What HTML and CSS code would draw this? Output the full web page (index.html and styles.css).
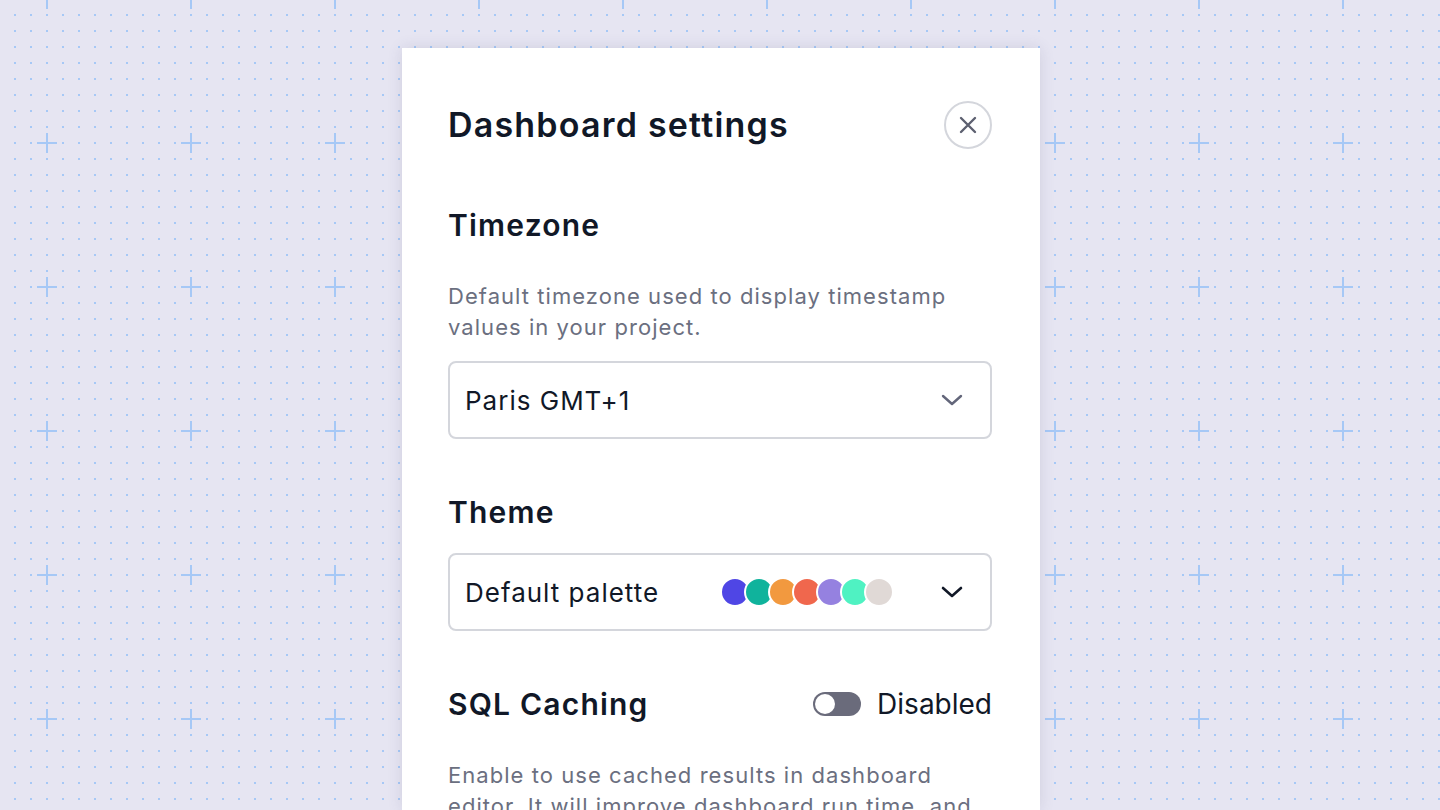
FILE: index.html
```html
<!DOCTYPE html>
<html lang="en">
<head>
<meta charset="utf-8">
<title>Dashboard settings</title>
<link rel="stylesheet" href="styles.css">
</head>
<body>
<svg class="backdrop" width="1440" height="810" aria-hidden="true">
  <defs>
    <pattern id="dots" width="16" height="16" patternUnits="userSpaceOnUse">
      <rect x="14" y="14" width="2" height="2" fill="#a6c8f6"/>
    </pattern>
    <pattern id="plus" x="0" y="-72" width="144" height="144" patternUnits="userSpaceOnUse">
      <rect x="46" y="61" width="2" height="20" fill="#a6c8f6"/>
      <rect x="37" y="70" width="20" height="2" fill="#a6c8f6"/>
    </pattern>
  </defs>
  <rect width="1440" height="810" fill="url(#dots)"/>
  <rect width="1440" height="810" fill="url(#plus)"/>
</svg>

<main class="modal">
  <header class="modal-header">
    <h1 class="modal-title">Dashboard settings</h1>
    <button class="close-btn" aria-label="Close">
      <svg width="18" height="18" viewBox="0 0 18 18"><path d="M2 2 L16 16 M16 2 L2 16" stroke="#5d6070" stroke-width="2.4" stroke-linecap="round"/></svg>
    </button>
  </header>

  <section class="section">
    <h2 class="section-title">Timezone</h2>
    <p class="section-desc">Default timezone used to display timestamp values in your project.</p>
    <div class="select">
      <span class="select-value">Paris GMT+1</span>
      <svg class="chevron" width="22" height="12" viewBox="0 0 22 12"><path d="M2 2 L11 10 L20 2" fill="none" stroke="#63667a" stroke-width="2.4" stroke-linecap="round" stroke-linejoin="round"/></svg>
    </div>
  </section>

  <section class="section section-theme">
    <h2 class="section-title">Theme</h2>
    <div class="select select-theme">
      <span class="select-value">Default palette</span>
      <span class="palette">
        <span class="swatch" style="background:#4f46e5"></span>
        <span class="swatch" style="background:#10b39c"></span>
        <span class="swatch" style="background:#f2993f"></span>
        <span class="swatch" style="background:#f0674d"></span>
        <span class="swatch" style="background:#9581e0"></span>
        <span class="swatch" style="background:#4ff2c2"></span>
        <span class="swatch" style="background:#e0d9d6"></span>
      </span>
      <svg class="chevron" width="22" height="12" viewBox="0 0 22 12"><path d="M2 2 L11 10 L20 2" fill="none" stroke="#111827" stroke-width="2.6" stroke-linecap="round" stroke-linejoin="round"/></svg>
    </div>
  </section>

  <section class="section section-sql">
    <div class="row">
      <h2 class="section-title">SQL Caching</h2>
      <label class="toggle-wrap">
        <span class="toggle"><span class="knob"></span></span>
        <span class="toggle-label">Disabled</span>
      </label>
    </div>
    <p class="section-desc">Enable to use cached results in dashboard editor. It will improve dashboard run time, and reduce the load on your data warehouse.</p>
  </section>
</main>
</body>
</html>
```

FILE: styles.css
```css
* { box-sizing: border-box; }

html, body {
  margin: 0;
  padding: 0;
  width: 1440px;
  height: 810px;
  overflow: hidden;
}

body {
  background: #e6e5f2;
  font-family: Inter, "Noto Sans", sans-serif;
  color: #111827;
  position: relative;
}

.backdrop {
  position: absolute;
  left: 0;
  top: 0;
  z-index: 0;
}

.modal {
  position: relative;
  z-index: 1;
  width: 638px;
  height: 762px;
  overflow: hidden;
  margin: 48px 0 0 402px;
  background: #ffffff;
  padding: 53px 48px 0 46px;
  box-shadow: 0 0 14px rgba(70, 70, 110, 0.14);
}

.modal-header {
  display: flex;
  align-items: center;
  justify-content: space-between;
  height: 48px;
}

.modal-title {
  margin: 0;
  font-size: 34px;
  font-weight: 600;
  letter-spacing: 1.2px;
  line-height: 48px;
}

.close-btn {
  width: 48px;
  height: 48px;
  border-radius: 50%;
  border: 2px solid #d4d6dc;
  background: #fff;
  display: flex;
  align-items: center;
  justify-content: center;
  padding: 0;
}

.section {
  margin-top: 56px;
}

.section-title {
  margin: 0;
  font-size: 30px;
  font-weight: 600;
  line-height: 40px;
  letter-spacing: 1.2px;
}

.section-desc {
  margin: 36px 0 0;
  font-size: 22px;
  line-height: 31px;
  letter-spacing: 1.05px;
  color: #6b6f80;
}

.select {
  margin-top: 18px;
  height: 78px;
  border: 2px solid #d4d6dc;
  border-radius: 8px;
  display: flex;
  align-items: center;
  padding: 0 27px 0 15px;
}

.select-value {
  font-size: 26px;
  letter-spacing: 1px;
  flex: 1;
}

.section-theme {
  margin-top: 53px;
}

.select-theme {
  margin-top: 21px;
}

.select-theme .select-value {
  flex: 0 0 auto;
}

.palette {
  display: flex;
  margin-left: auto;
  margin-right: 47px;
}

.swatch {
  width: 30px;
  height: 30px;
  border-radius: 50%;
  border: 2px solid #fff;
  margin-left: -6px;
}

.swatch:first-child {
  margin-left: 0;
}

.chevron {
  display: block;
}

.section-sql {
  margin-top: 53px;
}

.row {
  display: flex;
  align-items: center;
  justify-content: space-between;
}

.toggle-wrap {
  display: flex;
  align-items: center;
  gap: 16px;
}

.toggle {
  width: 48px;
  height: 24px;
  border-radius: 12px;
  background: #6a6b7b;
  display: flex;
  align-items: center;
  padding: 2px;
}

.knob {
  width: 20px;
  height: 20px;
  border-radius: 50%;
  background: #fff;
}

.toggle-label {
  font-size: 28px;
  color: #111827;
}
```
